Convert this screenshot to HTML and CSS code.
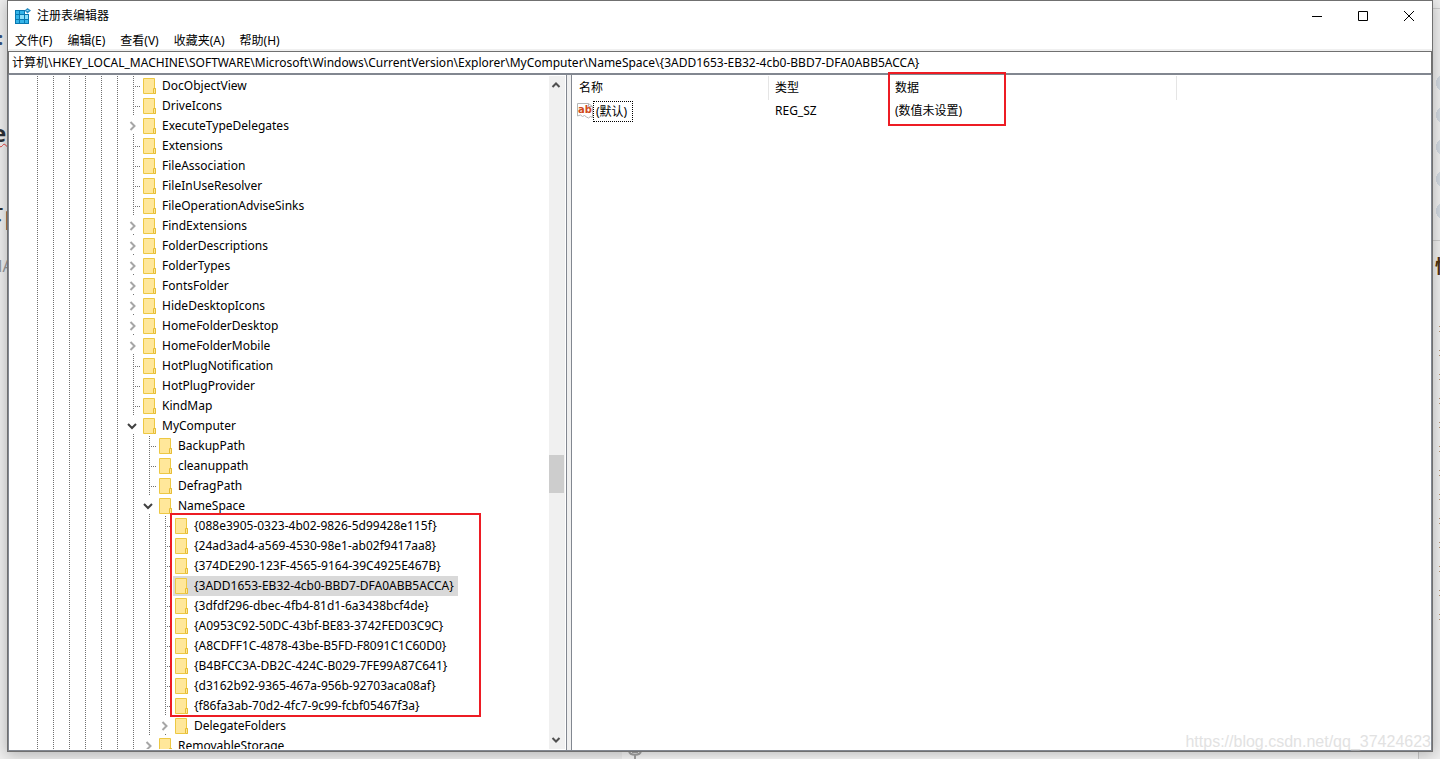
FILE: index.html
```html
<!DOCTYPE html>
<html lang="zh-CN">
<head>
<meta charset="utf-8">
<title>注册表编辑器</title>
<link rel="stylesheet" href="styles.css">
</head>
<body>
<div class="backdrop" aria-hidden="true">
  <span class="bg-text bg-mark">:</span>
  <span class="bg-text bg-heading">ec</span>
  <span class="bg-text bg-title">下门</span>
  <span class="bg-text bg-note">MA</span>
  <span class="bg-rule bg-rule-top"></span>
  <span class="bg-rule bg-rule-mid"></span>
  <span class="bg-dots"></span>
  <span class="bg-side">快</span>
  <span class="bg-ticks"></span>
  <span class="bg-foot"></span>
  <svg class="bg-mic" viewBox="0 0 14 8"><path d="M1 0c1 5 11 5 12 0M7 4v4M4 1h6" fill="none" stroke="#a5a5a5" stroke-width="2"/></svg>
</div>
<main class="window">
  <header class="titlebar">
    <svg class="app-icon" viewBox="0 0 16 16">
      <path d="M0 2h10v4h4v10H0z" fill="#0878b0"/>
      <path d="M1 3h3v3H1zM5 3h4v3H5zM1 7h3v4H1zM1 12h3v3H1zM5 12h4v3H5zM10 12h3v3h-3z" fill="#35b4e8"/>
      <path d="M5 7h4v4H5zM10 7h3v4h-3z" fill="#8be0fa"/>
      <path d="M12.500 0L16 2.500L12.500 5.500L9.500 2.500z" fill="#2a8fc4"/>
      <path d="M11.500 2.500h2" stroke="#8be0fa"/>
    </svg>
    <h1 class="title">注册表编辑器</h1>
    <div class="controls">
      <button class="control" aria-label="最小化"><svg viewBox="0 0 10 10"><path d="M0 5.500h10" stroke="#000"/></svg></button>
      <button class="control" aria-label="最大化"><svg viewBox="0 0 10 10"><path d="M.5.5h9v9h-9z" fill="none" stroke="#000"/></svg></button>
      <button class="control" aria-label="关闭"><svg viewBox="0 0 10 10"><path d="M0 0l10 10M10 0L0 10" stroke="#000"/></svg></button>
    </div>
  </header>
  <nav class="menubar">
    <button class="menu">文件(F)</button>
    <button class="menu">编辑(E)</button>
    <button class="menu">查看(V)</button>
    <button class="menu">收藏夹(A)</button>
    <button class="menu">帮助(H)</button>
  </nav>
  <input class="address" aria-label="地址" value="计算机\HKEY_LOCAL_MACHINE\SOFTWARE\Microsoft\Windows\CurrentVersion\Explorer\MyComputer\NameSpace\{3ADD1653-EB32-4cb0-BBD7-DFA0ABB5ACCA}">
  <div class="panes">
    <section class="tree-pane">
      <div class="tree-view">
        <ul class="tree" id="tree"></ul>
      </div>
      <div class="scrollbar">
        <button class="scroll-button" aria-label="向上滚动"><svg viewBox="0 0 10 8"><path d="M1.500 6L5 2.500L8.500 6" fill="none" stroke="#505050" stroke-width="2"/></svg></button>
        <span class="track-before"></span>
        <span class="thumb"></span>
        <span class="track-after"></span>
        <button class="scroll-button" aria-label="向下滚动"><svg viewBox="0 0 10 8"><path d="M1.500 2L5 5.500L8.500 2" fill="none" stroke="#505050" stroke-width="2"/></svg></button>
      </div>
    </section>
    <section class="value-pane">
      <table class="values">
        <colgroup><col class="col-name"><col class="col-type"><col class="col-data"><col></colgroup>
        <thead><tr><th>名称</th><th>类型</th><th class="data-head">数据<span class="mark mark-data"></span></th><th></th></tr></thead>
        <tbody><tr>
          <td class="name-cell"><div class="name">
            <svg class="string-icon" viewBox="0 0 16 16"><path d="M.5.5h11l4 3v11l-2-1-2 1.500-2-1-2-1.500-2 1-2-1.500-3 1z" fill="#fff" stroke="#b5b5b5"/><path d="M11.500.5v3h4" fill="none" stroke="#b5b5b5"/><text x="1" y="10" class="icon-text">ab</text></svg>
            <span class="focus">(默认)</span>
          </div></td>
          <td>REG_SZ</td><td>(数值未设置)</td><td></td>
        </tr></tbody>
      </table>
      <span class="watermark">https://blog.csdn.net/qq_37424623</span>
    </section>
  </div>
</main>
<script src="tree.js"></script>
</body>
</html>
```
FILE: styles.css
```css
* { box-sizing: border-box; }
body {
  margin: 0;
  height: 100vh;
  padding: 0 7px 7px;
  background: #f0f0f0;
  color: #000;
  font: 12px/20px "Noto Sans", "Noto Sans CJK SC", sans-serif;
  overflow: hidden;
}
button { border: 0; padding: 0; background: none; font: inherit; color: inherit; }
svg { display: block; }

/* page behind the window */
.backdrop { position: absolute; inset: 0; overflow: hidden; }
.bg-text { position: absolute; left: -8px; white-space: nowrap; color: #2d3238; }
.bg-mark { left: -2px; top: 28px; font-weight: 700; font-size: 18px; color: #35527d; }
.bg-heading { top: 120px; font-size: 24px; line-height: 26px; font-weight: 700; text-decoration: underline wavy #e04040 1px; }
.bg-title { left: -22px; top: 202px; font-size: 26px; line-height: 32px; }
.bg-note { left: -12px; top: 256px; font-size: 16px; color: #999; }
.bg-rule { position: absolute; right: 0; width: 8px; height: 1px; background: #cfcfcf; }
.bg-rule-top { top: 8px; }
.bg-rule-mid { top: 240px; }
.bg-dots { position: absolute; right: -12px; top: 67px; width: 16px; height: 160px; background: radial-gradient(circle, #d3dae2 0 8px, transparent 8px) 0 0 / 16px 32px; }
.bg-side { position: absolute; left: calc(100% - 5px); top: 256px; font-size: 18px; font-weight: 700; color: #50330f; }
.bg-ticks { position: absolute; right: 0; top: 326px; width: 1px; height: 294px; background: repeating-linear-gradient(#b79374 0 1px, transparent 1px 5px, #b79374 5px 6px, transparent 6px 24px); }
.bg-foot { position: absolute; left: 622px; right: 21px; bottom: 0; height: 8px; background: #fafafa; border-right: 1px solid #ccc; }
.bg-mic { position: absolute; left: 628px; bottom: 0; width: 14px; height: 8px; }

.window {
  position: relative;
  display: flex;
  flex-direction: column;
  height: 100%;
  background: #fff;
  border: 1px solid #707070;
  box-shadow: 0 2px 14px 1px rgba(0, 0, 0, .25);
}
.titlebar { display: flex; align-items: center; flex: 0 0 29px; padding-left: 7px; }
.app-icon { width: 16px; height: 16px; }
.title { margin: 0 0 0 6px; font-size: 12px; font-weight: 400; }
.controls { display: flex; margin-left: auto; }
.control { display: flex; align-items: center; justify-content: center; width: 46px; height: 28px; }
.control svg { width: 10px; height: 10px; }
.menubar { display: flex; flex: 0 0 21px; padding-top: 2px; border-bottom: 2px solid #f0f0f0; }
.menu { padding: 0 8px 0 7px; line-height: 17px; white-space: nowrap; }
.address {
  flex: 0 0 24px;
  width: 100%;
  min-width: 0;
  border: 1px solid #707070;
  border-width: 1px 1px 2px;
  border-radius: 0;
  border-bottom-color: #828790;
  padding: 0 2px 0 3px;
  font: inherit;
  color: inherit;
  outline: 0;
  background: #fff;
}
.panes { display: flex; flex: 1; min-height: 0; background: #f0f0f0; border: 1px solid #828790; border-top: 0; }
.tree-pane { display: flex; flex: 0 0 558px; padding: 1px 1px 1px 0; background: #fff; border-right: 1px solid #828790; }
.tree-view {
  flex: 1;
  overflow: hidden;
  background:
    repeating-linear-gradient(transparent 0 1px, #fff 1px 2px),
    repeating-linear-gradient(90deg, #707070 0 1px, #fff 1px 16px) 28px 0 / 96px 100% no-repeat;
}
.tree, .branch { margin: 0; padding: 0; list-style: none; }
.tree { padding-left: 116px; }
.branch { position: relative; padding-left: 16px; background: repeating-linear-gradient(#707070 0 1px, transparent 1px 2px) 8px 0 / 1px 100% no-repeat; }
.node { display: flex; align-items: center; height: 20px; white-space: nowrap; }
.twig {
  flex: 0 0 16px;
  height: 20px;
  background:
    repeating-linear-gradient(#707070 0 1px, transparent 1px 2px) 8px 0 / 1px 100% no-repeat,
    repeating-linear-gradient(90deg, #707070 0 1px, transparent 1px 2px) 8px 10px / 8px 1px no-repeat;
}
.toggle { background: repeating-linear-gradient(#707070 0 1px, transparent 1px 2px) 8px 18px / 1px 2px no-repeat; }
.toggle svg { width: 10px; height: 10px; margin-left: 2px; }
.folder { flex: none; width: 14px; height: 16px; }
.label { padding: 0 4px 0 5px; }
.entry { display: flex; align-items: center; height: 20px; padding-left: 2px; }
.selected .entry { background: #d9d9d9; }
.mark { position: absolute; border: 2px solid #ed1c24; }
.mark-branch { left: 29px; top: -3px; width: 311px; height: 204px; }
.mark-data { left: -1px; top: -4px; width: 118px; height: 54px; }

.scrollbar { display: flex; flex-direction: column; flex: 0 0 16px; background: #f0f0f0; }
.scroll-button { display: flex; align-items: center; justify-content: center; height: 18px; padding-right: 2px; }
.scroll-button svg { width: 10px; height: 8px; }
.thumb { flex: 0 0 38px; margin-right: 1px; background: #cdcdcd; }
.track-before { flex: 361; }
.track-after { flex: 238; }

.value-pane { position: relative; flex: 1; min-width: 0; margin-left: 4px; padding-top: 1px; background: #fff; border-left: 1px solid #828790; }
.values { width: 100%; table-layout: fixed; border-collapse: separate; border-spacing: 0; }
.col-name { width: 197px; }
.col-type { width: 120px; }
.col-data { width: 288px; }
.values th, .values td { padding: 0 6px; text-align: left; font-weight: 400; white-space: nowrap; }
.values th { height: 24px; border-right: 1px solid #e5e5e5; }
.values th:last-child { border-right: 0; }
.values th:nth-child(1) { padding-left: 7px; }
.values th:nth-child(2) { border-right-color: #fff; }
.values .data-head { position: relative; }
.values .name-cell { padding-left: 5px; }
.name { display: flex; align-items: center; height: 22px; }
.string-icon { width: 16px; height: 16px; }
.icon-text { font: 700 10px "DejaVu Sans", sans-serif; fill: #d04a20; }
.focus { padding: 0 5px 0 2px; line-height: 19px; border: 1px dotted #000; }
.watermark { position: absolute; right: 0; bottom: -2px; font: 16px/20px "Liberation Sans", sans-serif; color: #e2e2e2; }
```
FILE: tree.js
```js
const folderIcon = '<svg class="folder" viewBox="0 0 14 16"><path d="M.5.5h11v10h1v5H.5z" fill="#ffe79a" stroke="#edc843"/><path d="M10.500 15v-4.500h2v5h-2" fill="#ffe79a" stroke="#e6bd36"/></svg>';
const closedIcon = '<svg viewBox="0 0 10 10"><path d="M3.500 1l4 4-4 4" fill="none" stroke="#a6a6a6" stroke-width="2"/></svg>';
const openIcon = '<svg viewBox="0 0 10 10"><path d="M1 3l4 4 4-4" fill="none" stroke="#404040" stroke-width="2"/></svg>';

const leaf = (name, selected) => ({ name, selected });
const closed = name => ({ name, closed: true });
const open = (name, children, marked) => ({ name, children, marked });

const nodes = [
  leaf('DocObjectView'), leaf('DriveIcons'), closed('ExecuteTypeDelegates'),
  leaf('Extensions'), leaf('FileAssociation'), leaf('FileInUseResolver'),
  leaf('FileOperationAdviseSinks'), closed('FindExtensions'),
  closed('FolderDescriptions'), closed('FolderTypes'), closed('FontsFolder'),
  closed('HideDesktopIcons'), closed('HomeFolderDesktop'), closed('HomeFolderMobile'),
  leaf('HotPlugNotification'), leaf('HotPlugProvider'), leaf('KindMap'),
  open('MyComputer', [
    leaf('BackupPath'), leaf('cleanuppath'), leaf('DefragPath'),
    open('NameSpace', [
      leaf('{088e3905-0323-4b02-9826-5d99428e115f}'),
      leaf('{24ad3ad4-a569-4530-98e1-ab02f9417aa8}'),
      leaf('{374DE290-123F-4565-9164-39C4925E467B}'),
      leaf('{3ADD1653-EB32-4cb0-BBD7-DFA0ABB5ACCA}', true),
      leaf('{3dfdf296-dbec-4fb4-81d1-6a3438bcf4de}'),
      leaf('{A0953C92-50DC-43bf-BE83-3742FED03C9C}'),
      leaf('{A8CDFF1C-4878-43be-B5FD-F8091C1C60D0}'),
      leaf('{B4BFCC3A-DB2C-424C-B029-7FE99A87C641}'),
      leaf('{d3162b92-9365-467a-956b-92703aca08af}'),
      leaf('{f86fa3ab-70d2-4fc7-9c99-fcbf05467f3a}'),
      closed('DelegateFolders')
    ], true),
    closed('RemovableStorage')
  ])
];

function render(node) {
  const twig = node.closed || node.children
    ? `<button class="twig toggle" aria-label="${node.name}">${node.children ? openIcon : closedIcon}</button>`
    : '<span class="twig"></span>';
  const row = `<div class="node${node.selected ? ' selected' : ''}">${twig}<span class="entry">${folderIcon}<span class="label">${node.name}</span></span></div>`;
  const mark = node.marked ? '<li class="mark mark-branch"></li>' : '';
  const branch = node.children ? `<ul class="branch">${node.children.map(render).join('')}${mark}</ul>` : '';
  return `<li>${row}${branch}</li>`;
}

document.getElementById('tree').innerHTML = nodes.map(render).join('');
```
